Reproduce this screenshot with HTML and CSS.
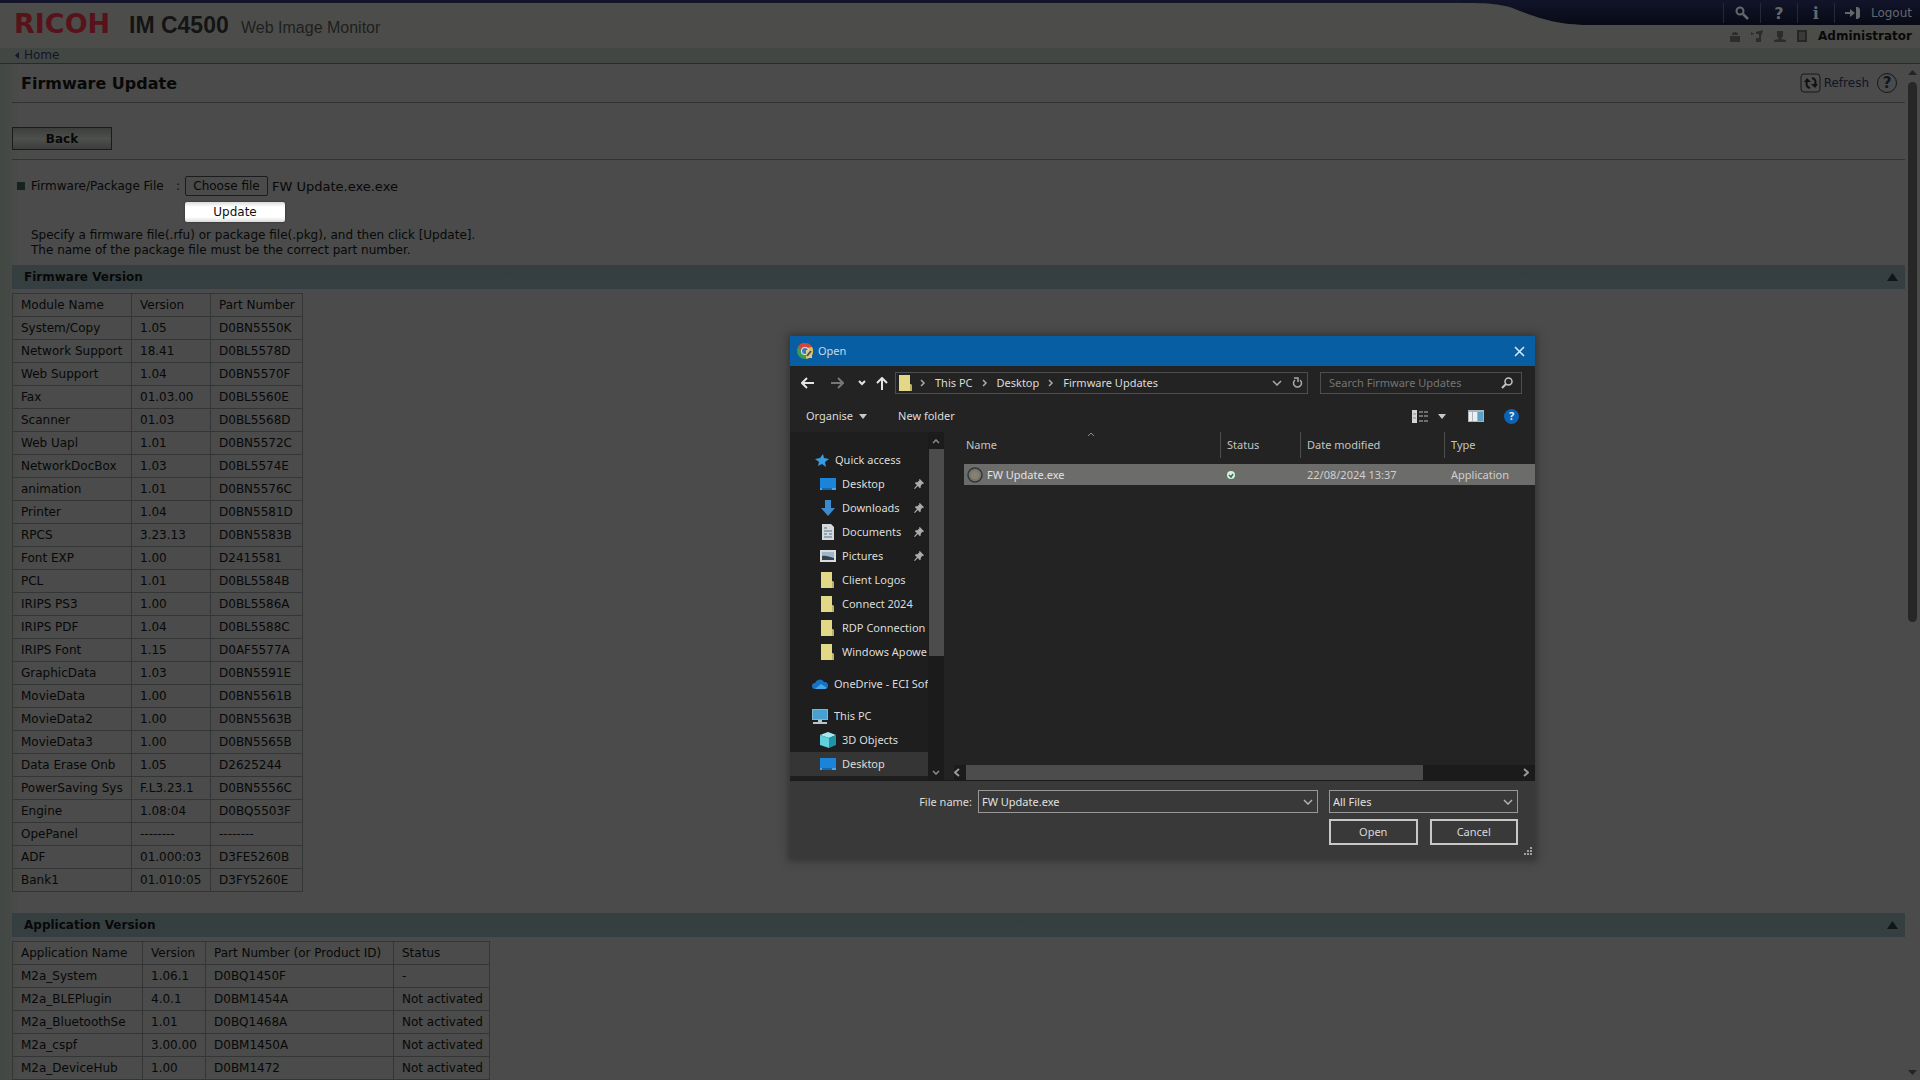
FILE: index.html
```html
<!DOCTYPE html>
<html lang="en">
<head>
<meta charset="UTF-8">
<meta name="viewport" content="width=device-width, initial-scale=1">
<title>Web Image Monitor</title>
<link rel="stylesheet" href="styles.css">
</head>
<body>
<svg class="defs" aria-hidden="true">
  <symbol id="folder" viewBox="0 0 16 16"><path d="M1 0h11v9l2 1v6H1z" fill="#e3d888"/><path d="M12 9l2 1v6h-2z" fill="#b9b06a"/></symbol>
  <symbol id="pin" viewBox="0 0 12 12"><path d="M7 0l5 5-1 1-1-.4L8 8l.2 2L7 11 4.700 8.500 1 12 0 11.500 3.500 7.300 1 5l1-1.200L4 4l2.400-2.200L6 1z" fill="#a9adb0"/></symbol>
  <symbol id="desk" viewBox="0 0 16 12"><path d="M0 0h16v12H0z" fill="#1b84d8"/><path d="M0 10h16v2H0z" fill="#4aa5e6"/><path d="M2 10h10v2H2z" fill="#1668ad"/></symbol>
  <symbol id="down" viewBox="0 0 10 6"><path d="M1 1l4 4 4-4" fill="none" stroke="currentColor" stroke-width="1.500"/></symbol>
  <symbol id="right" viewBox="0 0 6 8"><path d="M1 1l3 3-3 3" fill="none" stroke="currentColor" stroke-width="1.500"/></symbol>
</svg>

<header class="header">
  <svg class="swoosh" viewBox="0 0 460 26" aria-hidden="true">
    <defs><linearGradient id="navy" x1="0" y1="0" x2="0" y2="1"><stop offset="0" stop-color="#12142a"/><stop offset="1" stop-color="#070a15"/></linearGradient></defs>
    <path d="M0 0h460v25H130C95 25 75 17 55 9 42 4 30 3 0 3z" fill="url(#navy)"/>
  </svg>
  <div class="brand">
    <span class="logo">RICOH</span>
    <span class="model">IM C4500</span>
    <span class="product">Web Image Monitor</span>
  </div>
  <div class="account">
    <nav class="tools">
      <a href="#" aria-label="Search"><svg width="14" height="14" viewBox="0 0 14 14"><circle cx="5" cy="5" r="3.500" fill="none" stroke="#65676c" stroke-width="2"/><path d="M8 8l5 5" stroke="#65676c" stroke-width="2.500"/></svg></a>
      <a href="#" class="glyph">?</a>
      <a href="#" class="glyph serif">i</a>
      <a href="#" class="logout"><svg width="16" height="12" viewBox="0 0 16 12"><path d="M0 5h5V2l5 4-5 4V7H0z" fill="#65676c"/><path d="M11 0h2l2 2v8l-2 2h-2z" fill="#65676c"/></svg>Logout</a>
    </nav>
    <div class="user">
      <svg width="10" height="11" viewBox="0 0 10 11"><path d="M0 5h10v6H0zM2 4a3 3 0 0 1 6 0z" fill="#2b2d2b"/></svg>
      <svg width="12" height="12" viewBox="0 0 12 12"><path d="M0 2l3 2-3 1zM5 2l7-2-1 4-1 1v7H5V8h3V4H5z" fill="#2b2d2b"/></svg>
      <svg width="12" height="11" viewBox="0 0 12 11"><path d="M3 0h6v5L7 8l5 1v2H0V9l5-1-2-3z" fill="#2b2d2b"/></svg>
      <svg width="10" height="12" viewBox="0 0 10 12"><path d="M0 0h10v12H0z" fill="#262826"/><path d="M2 3h6M2 5h6M2 7h6M2 9h6" stroke="#4b4e4b"/></svg>
      <b>Administrator</b>
    </div>
  </div>
</header>
<nav class="crumb"><a href="#"><svg width="4" height="7" viewBox="0 0 4 7"><path d="M4 0v7L0 3.500z" fill="#15182c"/></svg>Home</a></nav>

<div class="page">
  <main class="main">
    <div class="titlebar">
      <h1>Firmware Update</h1>
      <a href="#" class="refresh"><svg width="22" height="20" viewBox="0 0 22 20"><rect x="1" y="1" width="19" height="18" rx="3" fill="#4c4e4c" stroke="#161817"/><path d="M10 15c-4-1-4-4-3-7" fill="none" stroke="#111" stroke-width="2"/><path d="M4 9l3-4 4 4z" fill="#111"/><path d="M12 5c4 1 4 4 3 7" fill="none" stroke="#111" stroke-width="2"/><path d="M18 11l-3 4-4-4z" fill="#111"/></svg>Refresh</a>
      <a href="#" class="help">?</a>
    </div>
    <div class="actions"><button type="button" class="btn back">Back</button></div>

    <form class="upload">
      <div class="field">
        <span class="bullet"></span>
        <span class="label">Firmware/Package File</span>
        <span class="colon">:</span>
        <label class="choose" for="fwFile">Choose file</label>
        <input type="file" id="fwFile" hidden>
        <span class="chosen">FW Update.exe.exe</span>
      </div>
      <button type="button" class="btn update">Update</button>
      <p>Specify a firmware file(.rfu) or package file(.pkg), and then click [Update].<br>The name of the package file must be the correct part number.</p>
    </form>

    <section>
      <h2>Firmware Version <svg width="11" height="8" viewBox="0 0 11 8"><path d="M5.500 0L11 8H0z" fill="#101816"/></svg></h2>
      <table class="modules">
        <tr><th>Module Name</th><th>Version</th><th>Part Number</th></tr>
        <tr><td>System/Copy</td><td>1.05</td><td>D0BN5550K</td></tr>
        <tr><td>Network Support</td><td>18.41</td><td>D0BL5578D</td></tr>
        <tr><td>Web Support</td><td>1.04</td><td>D0BN5570F</td></tr>
        <tr><td>Fax</td><td>01.03.00</td><td>D0BL5560E</td></tr>
        <tr><td>Scanner</td><td>01.03</td><td>D0BL5568D</td></tr>
        <tr><td>Web Uapl</td><td>1.01</td><td>D0BN5572C</td></tr>
        <tr><td>NetworkDocBox</td><td>1.03</td><td>D0BL5574E</td></tr>
        <tr><td>animation</td><td>1.01</td><td>D0BN5576C</td></tr>
        <tr><td>Printer</td><td>1.04</td><td>D0BN5581D</td></tr>
        <tr><td>RPCS</td><td>3.23.13</td><td>D0BN5583B</td></tr>
        <tr><td>Font EXP</td><td>1.00</td><td>D2415581</td></tr>
        <tr><td>PCL</td><td>1.01</td><td>D0BL5584B</td></tr>
        <tr><td>IRIPS PS3</td><td>1.00</td><td>D0BL5586A</td></tr>
        <tr><td>IRIPS PDF</td><td>1.04</td><td>D0BL5588C</td></tr>
        <tr><td>IRIPS Font</td><td>1.15</td><td>D0AF5577A</td></tr>
        <tr><td>GraphicData</td><td>1.03</td><td>D0BN5591E</td></tr>
        <tr><td>MovieData</td><td>1.00</td><td>D0BN5561B</td></tr>
        <tr><td>MovieData2</td><td>1.00</td><td>D0BN5563B</td></tr>
        <tr><td>MovieData3</td><td>1.00</td><td>D0BN5565B</td></tr>
        <tr><td>Data Erase Onb</td><td>1.05</td><td>D2625244</td></tr>
        <tr><td>PowerSaving Sys</td><td>F.L3.23.1</td><td>D0BN5556C</td></tr>
        <tr><td>Engine</td><td>1.08:04</td><td>D0BQ5503F</td></tr>
        <tr><td>OpePanel</td><td>--------</td><td>--------</td></tr>
        <tr><td>ADF</td><td>01.000:03</td><td>D3FE5260B</td></tr>
        <tr><td>Bank1</td><td>01.010:05</td><td>D3FY5260E</td></tr>
      </table>
    </section>

    <section>
      <h2>Application Version <svg width="11" height="8" viewBox="0 0 11 8"><path d="M5.500 0L11 8H0z" fill="#101816"/></svg></h2>
      <table class="apps">
        <tr><th>Application Name</th><th>Version</th><th>Part Number (or Product ID)</th><th>Status</th></tr>
        <tr><td>M2a_System</td><td>1.06.1</td><td>D0BQ1450F</td><td>-</td></tr>
        <tr><td>M2a_BLEPlugin</td><td>4.0.1</td><td>D0BM1454A</td><td>Not activated</td></tr>
        <tr><td>M2a_BluetoothSe</td><td>1.01</td><td>D0BQ1468A</td><td>Not activated</td></tr>
        <tr><td>M2a_cspf</td><td>3.00.00</td><td>D0BM1450A</td><td>Not activated</td></tr>
        <tr><td>M2a_DeviceHub</td><td>1.00</td><td>D0BM1472</td><td>Not activated</td></tr>
      </table>
    </section>
  </main>
  <div class="scroll">
    <svg width="9" height="5" viewBox="0 0 9 5"><path d="M4.500 0L9 5H0z" fill="#232423"/></svg>
    <div class="track"><div class="thumb"></div></div>
    <svg width="9" height="5" viewBox="0 0 9 5"><path d="M0 0h9L4.500 5z" fill="#232423"/></svg>
  </div>
</div>

<div class="dialog" role="dialog" aria-label="Open">
  <div class="caption">
    <svg width="16" height="16" viewBox="0 0 16 16"><circle cx="8" cy="8" r="8" fill="#3c9a52"/><path d="M1 4a8 8 0 0 1 14 0l-7 1-3 3z" fill="#d2453c"/><path d="M15 4a8 8 0 0 1-6 12l3-7-2-4z" fill="#e3bd4d"/><circle cx="8" cy="8" r="4" fill="#dfe6ec"/><circle cx="8" cy="8" r="3" fill="#3b78c4"/><path d="M9 7h6v8H9z" fill="#d9c98f"/><path d="M10 13l4-5" stroke="#554b38" stroke-width="2"/></svg>
    <span>Open</span>
    <button type="button" aria-label="Close"><svg width="11" height="11" viewBox="0 0 11 11"><path d="M1 1l9 9M10 1l-9 9" stroke="#dfe9f2" stroke-width="1.500"/></svg></button>
  </div>

  <div class="navrow">
    <button type="button" aria-label="Back"><svg width="13" height="12" viewBox="0 0 13 12"><path d="M6 1L1 6l5 5M1 6h12" fill="none" stroke="#e4e4e4" stroke-width="2"/></svg></button>
    <button type="button" class="forward" aria-label="Forward"><svg width="13" height="12" viewBox="0 0 13 12"><path d="M7 1l5 5-5 5M12 6H0" fill="none" stroke="#777" stroke-width="2"/></svg></button>
    <button type="button" class="recent" aria-label="Recent"><svg width="8" height="6" viewBox="0 0 8 6"><path d="M1 1l3 3 3-3" fill="none" stroke="#e4e4e4" stroke-width="2"/></svg></button>
    <button type="button" class="up" aria-label="Up"><svg width="12" height="13" viewBox="0 0 12 13"><path d="M1 6l5-5 5 5M6 1v12" fill="none" stroke="#e4e4e4" stroke-width="2"/></svg></button>
    <div class="address">
      <svg width="16" height="16"><use href="#folder"/></svg>
      <svg width="6" height="8"><use href="#right"/></svg><a href="#">This PC</a>
      <svg width="6" height="8"><use href="#right"/></svg><a href="#">Desktop</a>
      <svg width="6" height="8"><use href="#right"/></svg><a href="#">Firmware Updates</a>
      <button type="button" class="end" aria-label="Previous locations"><svg width="10" height="6"><use href="#down"/></svg></button>
      <button type="button" aria-label="Refresh"><svg width="11" height="12" viewBox="0 0 11 12"><path d="M8 3a4 4 0 1 1-5 0" fill="none" stroke="#aaa" stroke-width="1.500"/><path d="M2 1h4v4" fill="none" stroke="#aaa" stroke-width="1.500"/></svg></button>
    </div>
    <div class="search">
      <input type="text" placeholder="Search Firmware Updates" aria-label="Search Firmware Updates">
      <svg width="12" height="12" viewBox="0 0 12 12"><circle cx="7.500" cy="4.500" r="3.500" fill="none" stroke="#c4c4c4" stroke-width="1.500"/><path d="M5 7l-4 4" stroke="#c4c4c4" stroke-width="2"/></svg>
    </div>
  </div>

  <div class="toolbar">
    <button type="button">Organise <svg width="8" height="5" viewBox="0 0 8 5"><path d="M0 0h8L4 5z" fill="#c8c8c8"/></svg></button>
    <button type="button" class="new">New folder</button>
    <button type="button" class="view" aria-label="View"><svg width="16" height="13" viewBox="0 0 16 13"><path d="M0 0h5v13H0z" fill="#d5d5d5"/><path d="M1 4h3M1 8h3" stroke="#888"/><path d="M7 2h4M12 2h4M7 6h4M12 6h4M7 11h4M12 11h4" stroke="#86898b" stroke-width="1.500"/></svg></button>
    <button type="button" class="more" aria-label="More views"><svg width="8" height="5" viewBox="0 0 8 5"><path d="M0 0h8L4 5z" fill="#c8c8c8"/></svg></button>
    <button type="button" class="pane" aria-label="Preview pane"><svg width="16" height="12" viewBox="0 0 16 12"><path d="M0 0h16v12H0z" fill="#aab5bd"/><path d="M1 2h3v9H1zM5 2h4v9H5z" fill="#eceeef"/><path d="M10 2h5v9h-5z" fill="#5ba0c6"/></svg></button>
    <button type="button" class="info" aria-label="Help">?</button>
  </div>

  <div class="browser">
    <ul class="tree">
      <li class="root"><svg width="14" height="13" viewBox="0 0 14 13"><path d="M8 0l1 4 5 1-4 3 1 5-4-3-4 2 1-4-4-3 5-1z" fill="#3a9be0"/></svg>Quick access</li>
      <li><svg width="16" height="12"><use href="#desk"/></svg>Desktop<svg class="pin" width="10" height="10"><use href="#pin"/></svg></li>
      <li><svg width="16" height="16" viewBox="0 0 16 16"><path d="M5 0h6v8h4l-7 8-7-8h4z" fill="#3b8bcf"/></svg>Downloads<svg class="pin" width="10" height="10"><use href="#pin"/></svg></li>
      <li><svg width="16" height="16" viewBox="0 0 16 16"><path d="M2 0h9l3 3v13H2z" fill="#d3dadd"/><path d="M4 4h3M4 7h8M4 10h3M9 10h3M4 13h8" stroke="#557184"/></svg>Documents<svg class="pin" width="10" height="10"><use href="#pin"/></svg></li>
      <li><svg width="16" height="12" viewBox="0 0 16 12"><path d="M0 0h16v12H0z" fill="#d8dcdf"/><path d="M2 2h12v8H2z" fill="#9fb6c8"/><path d="M2 6c4-1 7 1 12 2v2H2z" fill="#33424d"/></svg>Pictures<svg class="pin" width="10" height="10"><use href="#pin"/></svg></li>
      <li><svg width="16" height="16"><use href="#folder"/></svg>Client Logos</li>
      <li><svg width="16" height="16"><use href="#folder"/></svg>Connect 2024</li>
      <li><svg width="16" height="16"><use href="#folder"/></svg>RDP Connection</li>
      <li><svg width="16" height="16"><use href="#folder"/></svg>Windows Apowe</li>
      <li class="root gap"><svg width="16" height="10" viewBox="0 0 16 10"><path d="M3 10a3 3 0 0 1 0-6 5 5 0 0 1 9-1 3 3 0 0 1 1 7z" fill="#1673c4"/><path d="M3 10l6-5 6 4-2 1z" fill="#46a7e8"/></svg>OneDrive - ECI Sof</li>
      <li class="root gap"><svg width="16" height="15" viewBox="0 0 16 15"><path d="M0 0h16v11H0z" fill="#7fb7d0"/><path d="M1 1h14v9H1z" fill="#47a0d0"/><path d="M6 11h4v2H6zM1 13h14v2H1z" fill="#b5c6cc"/></svg>This PC</li>
      <li><svg width="16" height="16" viewBox="0 0 16 16"><path d="M0 3l8-3 8 3-7 3z" fill="#a5eaf0"/><path d="M0 3l9 3v10l-9-3z" fill="#5fd0dc"/><path d="M9 6l7-3v10l-7 3z" fill="#1f94a6"/></svg>3D Objects</li>
      <li class="sel"><svg width="16" height="12"><use href="#desk"/></svg>Desktop</li>
    </ul>
    <div class="vbar">
      <svg width="8" height="5" viewBox="0 0 8 5"><path d="M1 4l3-3 3 3" fill="none" stroke="#8a8a8a" stroke-width="1.500"/></svg>
      <div class="vthumb"></div>
      <svg class="last" width="8" height="5" viewBox="0 0 8 5"><path d="M1 1l3 3 3-3" fill="none" stroke="#8a8a8a" stroke-width="1.500"/></svg>
    </div>
    <div class="files">
      <table>
        <colgroup><col class="c-name"><col class="c-status"><col class="c-date"><col></colgroup>
        <thead><tr><th><span>Name</span><svg class="sort" width="8" height="5" viewBox="0 0 8 5"><path d="M1 4l3-3 3 3" fill="none" stroke="#8a8a8a"/></svg></th><th><span>Status</span></th><th><span>Date modified</span></th><th><span>Type</span></th></tr></thead>
        <tbody><tr>
          <td class="fname"><svg width="16" height="16" viewBox="0 0 16 16"><circle cx="8" cy="8" r="7" fill="#75756f" stroke="#33363a" stroke-width="1.500"/><circle cx="8" cy="8" r="4" fill="#87806c"/></svg>FW Update.exe</td>
          <td><svg width="8" height="8" viewBox="0 0 8 8"><circle cx="4" cy="4" r="4" fill="#d8eee0"/><path d="M2 4l2 2 2-3" fill="none" stroke="#217a45" stroke-width="1.500"/></svg></td>
          <td>22/08/2024 13:37</td><td>Application</td>
        </tr></tbody>
      </table>
      <div class="hbar">
        <svg width="6" height="9" viewBox="0 0 6 9"><path d="M5 1L1 4.500 5 8" fill="none" stroke="#999" stroke-width="2"/></svg>
        <div class="htrack"><div class="hthumb"></div></div>
        <svg width="6" height="9" viewBox="0 0 6 9"><path d="M1 1l4 3.500L1 8" fill="none" stroke="#999" stroke-width="2"/></svg>
      </div>
    </div>
  </div>

  <div class="footer">
    <label for="fileName">File name:</label>
    <div class="combo">
      <input type="text" id="fileName" value="FW Update.exe">
      <button type="button" aria-label="Recent names"><svg width="10" height="6"><use href="#down"/></svg></button>
    </div>
    <div class="combo kind">
      <select aria-label="File type"><option>All Files</option></select>
      <svg width="10" height="6"><use href="#down"/></svg>
    </div>
    <div class="choice">
      <button type="button">Open</button>
      <button type="button">Cancel</button>
    </div>
    <svg class="grip" width="8" height="8" viewBox="0 0 8 8"><path d="M6 0h2v2H6zM3 3h2v2H3zM6 3h2v2H6zM0 6h2v2H0zM3 6h2v2H3zM6 6h2v2H6z" fill="#a0a0a0"/></svg>
  </div>
</div>
</body>
</html>
```

FILE: styles.css
```css
:root{
  --bg:#4a4b4a;--line:#303331;--text:#080808;--link:#121524;
  --dlg:#222322;--dlg-foot:#383938;--dlg-text:#dcdcdc;--bar:#4c4c4c
}
*{box-sizing:border-box;margin:0;padding:0}
body{height:100vh;display:flex;flex-direction:column;overflow:hidden;background:var(--bg);color:var(--text);font-family:"DejaVu Sans",Verdana,sans-serif;font-size:12px;line-height:15px}
a{color:var(--link);text-decoration:none}
button,input,select{font:inherit;color:inherit}
svg{flex:none;display:block}
.defs{display:none}

/* header */
.header{position:relative;display:flex;justify-content:space-between;height:48px;padding-left:14px;border-top:3px solid #14152a;background:#4c4d4a}
.swoosh{position:absolute;right:0;top:-3px;width:460px;height:26px}
.brand{display:flex;align-items:baseline;font-family:"Liberation Sans",Arial,sans-serif;line-height:42px}
.logo{width:115px;font-family:"DejaVu Sans",sans-serif;font-size:27px;font-weight:bold;color:#58121a}
.model{width:112px;font-size:23px;font-weight:bold;color:#141414}
.product{font-size:16px;color:#1e1e1e}
.account{position:relative;padding-right:8px}
.tools{display:flex;height:20px;color:#65676c}
.tools a{width:37px;display:flex;align-items:center;justify-content:center;border-left:1px solid #262838;color:#65676c}
.tools .glyph{font-size:16px;font-weight:bold}
.tools .serif{font-family:"DejaVu Serif",serif}
.tools .logout{width:auto;padding-left:10px;gap:10px}
.user{display:flex;align-items:center;justify-content:flex-end;gap:12px;height:26px}
.user svg{margin-right:-1px}
.crumb{height:16px;padding-left:15px;border-bottom:1px solid #272a28;background:#434744}
.crumb a{display:flex;align-items:center;gap:5px}

/* page */
.page{flex:1;min-height:0;display:flex}
.main{flex:1;padding:0 1px 0 12px;overflow-y:auto;scrollbar-width:none;background:linear-gradient(90deg,#414843,#4a4b4a 20px)}
.titlebar{display:flex;align-items:center;height:39px;padding:0 8px 0 9px;border-bottom:1px solid var(--line)}
h1{flex:1;padding-top:2px;font-size:16px;line-height:20px}
.refresh{display:flex;align-items:center;gap:2px}
.help{width:20px;height:20px;margin-left:8px;border:1px solid #161817;border-radius:50%;text-align:center;font-size:15px;font-weight:bold;line-height:18px}
.actions{height:57px;padding-top:24px;border-bottom:1px solid var(--line)}
.btn{display:block;width:100px;text-align:center;line-height:20px}
.back{height:23px;border:1px solid #1a1c1a;background:linear-gradient(#3c3e3c,#4e504e 50%,#3c3e3c);font-weight:bold}
.upload{padding-top:16px}
.field{display:flex;align-items:center;height:20px;padding-left:5px}
.bullet{width:8px;height:8px;margin-right:6px;background:#152420}
.label{width:145px}
.colon{width:9px}
.choose{width:83px;height:20px;margin-right:4px;border:1px solid #1c1c1c;border-radius:2px;text-align:center;line-height:18px}
.chosen{font-size:13px}
.update{height:20px;margin:6px 0 0 173px;border:0;border-radius:2px;background:linear-gradient(#dcdcdc,#fff 25%,#fff 75%,#dcdcdc);color:#111;box-shadow:0 0 2px #222}
.upload p{padding:6px 19px 7px}
h2{display:flex;align-items:center;justify-content:space-between;height:24px;padding:0 7px 0 12px;background:linear-gradient(#363f3e,#353e42);font-size:12px}
section + section h2{margin-top:21px}
.main table{margin-top:4px;border-collapse:collapse;table-layout:fixed}
.main th,.main td{height:23px;padding:0 8px;border:1px solid #343635;text-align:left;font-weight:normal;white-space:nowrap}
.modules{width:291px}
.modules th:nth-child(1){width:119px}
.modules th:nth-child(2){width:79px}
.apps{width:478px}
.apps th:nth-child(1){width:130px}
.apps th:nth-child(2){width:63px}
.apps th:nth-child(3){width:188px}
.scroll{display:flex;flex-direction:column;align-items:center;width:14px;padding:6px 2px 5px 1px}
.track{flex:1;width:9px;padding:7px 0}
.thumb{height:55%;border-radius:5px;background:#262726}

/* file dialog */
.dialog{position:absolute;left:790px;top:336px;width:745px;background:var(--dlg);color:var(--dlg-text);font-family:"Noto Sans","Segoe UI",sans-serif;font-size:11px;line-height:16px;box-shadow:0 0 8px 2px #333}
.dialog button{border:0;background:none}
.caption{display:flex;align-items:center;gap:5px;height:30px;padding:0 8px 0 7px;background:#085ea3;color:#c9d9e8}
.caption button{margin-left:auto;padding:2px}
.navrow{display:flex;align-items:center;height:34px;padding:0 13px 0 11px}
.navrow > button{width:30px;display:flex}
.navrow > .forward{width:27px}
.navrow > .recent{width:18px}
.navrow > .up{width:19px}
.address,.search{display:flex;align-items:center;height:22px;border:1px solid #4e4e4e;color:#aaa}
.address{flex:1;padding:0 4px 0 2px}
.address svg{margin-right:9px}
.address > svg:first-child{margin-right:6px}
.address a{margin-right:9px;color:var(--dlg-text)}
.address button svg{margin:0}
.address .end{margin-left:auto;margin-right:10px}
.search{width:202px;margin-left:12px;padding:0 8px}
.search input{flex:1;min-width:0;border:0;background:none}
.search input::placeholder{color:#757575}
.toolbar{display:flex;align-items:center;height:32px;padding:0 16px}
.toolbar button{display:flex;align-items:center;gap:6px}
.toolbar .new{margin-left:31px}
.toolbar .view{margin-left:auto}
.toolbar .more{margin-left:10px}
.toolbar .pane{margin-left:22px}
.toolbar .info{width:15px;height:15px;margin-left:20px;border-radius:50%;justify-content:center;background:#0d62b5;color:#e6eef7;font-weight:bold}
.browser{display:flex;height:349px;border-bottom:1px solid #1a1a1a}
.tree{width:138px;padding-top:16px;overflow:hidden;list-style:none;background:#1d1e1d}
.tree li{display:flex;align-items:center;gap:6px;height:24px;padding-left:30px;white-space:nowrap}
.tree .root{padding-left:22px}
.tree .root:first-child{padding-left:25px}
.tree .gap{margin-top:8px}
.tree .pin{margin-left:auto;margin-right:4px}
.tree .sel{background:#343534}
.vbar{width:16px;display:flex;flex-direction:column;align-items:center;padding:7px 0 5px;background:#1a1b1a}
.vthumb{width:15px;height:207px;margin-top:5px;background:var(--bar)}
.vbar .last{margin-top:auto}
.files{flex:1;min-width:0;display:flex;flex-direction:column;padding-left:20px}
.files table{width:100%;border-collapse:collapse;table-layout:fixed}
.c-name{width:256px}
.c-status{width:80px}
.c-date{width:144px}
.files th{height:32px;text-align:left;vertical-align:top;font-weight:normal;color:#c4c4c4;position:relative}
.files th span{display:block;padding-left:2px;line-height:26px}
.files th + th span{padding-left:6px;border-left:1px solid #4e4e4e}
.files .sort{position:absolute;left:123px;top:0}
.files td{height:21px;padding-left:7px;background:#6c6c6b;color:#d0d0d0;white-space:nowrap}
.files td.fname{display:flex;align-items:center;gap:4px;padding-left:3px;color:#e2e2e2}
.hbar{display:flex;align-items:center;gap:6px;height:15px;margin:auto 0 0 -10px;padding-right:6px;background:#1a1b1a}
.htrack{flex:1}
.hthumb{width:83%;height:15px;background:var(--bar)}
.footer{display:grid;grid-template-columns:1fr 340px 189px;column-gap:11px;row-gap:6px;padding:9px 17px 14px 0;background:var(--dlg-foot);position:relative}
.footer label{justify-self:end;margin-right:-5px;line-height:23px}
.combo{display:flex;align-items:center;height:23px;padding-right:4px;border:1px solid #989898;color:#b0b0b0}
.combo input,.combo select{flex:1;min-width:0;padding-left:3px;border:0;background:none;color:#e0e0e0;appearance:none}
.combo.kind select{height:20px}
.choice{grid-column:3;display:grid;grid-template-columns:1fr 1fr;gap:12px}
.dialog .choice button{height:26px;border:2px solid #c8c8c8;color:#d8d8d8}
.grip{position:absolute;right:3px;bottom:4px}
```
